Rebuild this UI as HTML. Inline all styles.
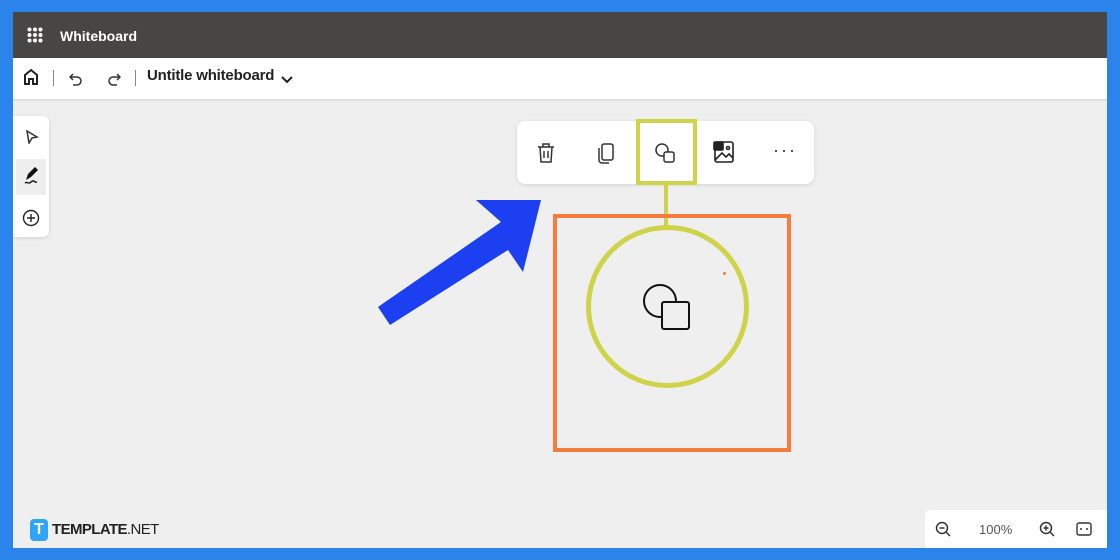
<!DOCTYPE html>
<html><head><meta charset="utf-8"><style>
*{margin:0;padding:0;box-sizing:border-box}
body{width:1120px;height:560px;background:#2b84ea;position:relative;overflow:hidden;font-family:"Liberation Sans",sans-serif}
#app{position:absolute;left:13px;top:12px;width:1094px;height:536px;background:#efefef;overflow:hidden}
.hdr{position:absolute;left:0;top:0;width:100%;height:46px;background:#474644;color:#fff}
.bar{position:absolute;left:0;top:46px;width:100%;height:41px;background:#fff;box-shadow:0 1px 3px rgba(0,0,0,.12)}
.abs{position:absolute}
</style></head><body>
<div id="app">
 <div class="hdr">
  <svg class="abs" style="left:14px;top:15px" width="16" height="16" fill="#fff"><g><circle cx="2.5" cy="2.5" r="2"/><circle cx="8" cy="2.5" r="2"/><circle cx="13.5" cy="2.5" r="2"/><circle cx="2.5" cy="8" r="2"/><circle cx="8" cy="8" r="2"/><circle cx="13.5" cy="8" r="2"/><circle cx="2.5" cy="13.5" r="2"/><circle cx="8" cy="13.5" r="2"/><circle cx="13.5" cy="13.5" r="2"/></g></svg>
  <div class="abs" style="left:47px;top:16px;font-size:14px;font-weight:bold">Whiteboard</div>
 </div>
 <div class="bar">
  <svg class="abs" style="left:10px;top:10px" width="16" height="18" fill="none" stroke="#222" stroke-width="2"><path d="M2 16V7l6-5 6 5v9h-4v-5H6v5z"/></svg>
  <div class="abs" style="left:40px;top:12px;width:1px;height:16px;background:#888"></div>
  <svg class="abs" style="left:56px;top:14px" width="14" height="14" fill="none" stroke="#333" stroke-width="1.5"><path d="M4 2L1 5l3 3M1 5h7a4 4 0 010 8H4"/></svg>
  <svg class="abs" style="left:94px;top:14px" width="14" height="14" fill="none" stroke="#333" stroke-width="1.5"><path d="M10 2l3 3-3 3M13 5H6a4 4 0 000 8h4"/></svg>
  <div class="abs" style="left:122px;top:12px;width:1px;height:16px;background:#888"></div>
  <div class="abs" style="left:134px;top:9px;font-size:15px;font-weight:bold;color:#222;letter-spacing:-0.2px">Untitle whiteboard</div>
  <svg class="abs" style="left:268px;top:18px" width="12" height="8" fill="none" stroke="#222" stroke-width="2"><path d="M1 1l5 5 5-5"/></svg>
 </div>
 <div class="abs" style="left:0;top:104px;width:36px;height:121px;background:#fff;border-radius:0 6px 6px 0;box-shadow:0 1px 4px rgba(0,0,0,.12)">
  <svg class="abs" style="left:12px;top:14px" width="14" height="14" fill="none" stroke="#333" stroke-width="1.5"><path d="M2 1l10 6-5 1-3 5z"/></svg>
  <div class="abs" style="left:3px;top:43px;width:30px;height:36px;background:#eee"></div>
  <svg class="abs" style="left:10px;top:50px" width="18" height="20" fill="#111"><path d="M3 14l2-6 7-7 3 3-7 7z"/><path d="M2 17c3-2 3 2 6-1s3 1 6 0" stroke="#111" stroke-width="1.4" fill="none"/></svg>
  <svg class="abs" style="left:9px;top:93px" width="18" height="18" fill="none" stroke="#222" stroke-width="1.4"><circle cx="9" cy="9" r="7.5"/><path d="M9 5v8M5 9h8"/></svg>
 </div>
 <div class="abs" style="left:504px;top:109px;width:297px;height:63px;background:#fff;border-radius:8px;box-shadow:0 1px 4px rgba(0,0,0,.12)"></div>
 <svg class="abs" style="left:523px;top:130px" width="20" height="22" fill="none" stroke="#333" stroke-width="1.5"><path d="M2 5h16M7 5V2h6v3M4 5l1 15h10l1-15M8 9v7M12 9v7"/></svg>
 <svg class="abs" style="left:583px;top:130px" width="20" height="22" fill="none" stroke="#333" stroke-width="1.5"><rect x="6" y="2" width="11" height="16" rx="2"/><path d="M3 6v12a3 3 0 003 3h7"/></svg>
 <div class="abs" style="left:623px;top:107px;width:61px;height:66px;border:4px solid #cfd34a"></div>
 <svg class="abs" style="left:641px;top:130px" width="24" height="24" fill="none" stroke="#333" stroke-width="1.5"><circle cx="8" cy="8" r="6"/><rect x="10" y="10" width="10" height="10" rx="2" fill="#fff"/></svg>
 <svg class="abs" style="left:700px;top:128px" width="22" height="24" fill="none" stroke="#222" stroke-width="1.6"><rect x="2" y="2" width="18" height="20" rx="2"/><rect x="1" y="2" width="9" height="8" rx="1" fill="#222"/><path d="M2 20l7-7 4 4 3-3 4 4"/><circle cx="15" cy="8" r="1.5"/></svg>
 <div class="abs" style="left:760px;top:128px;font-size:18px;color:#333;letter-spacing:2px">···</div>
 <div class="abs" style="left:651px;top:173px;width:4px;height:42px;background:#cfd34a"></div>
 <div class="abs" style="left:540px;top:202px;width:238px;height:238px;border:4px solid #f47c3c"></div>
 <div class="abs" style="left:573px;top:213px;width:163px;height:163px;border:5px solid #cfd34a;border-radius:50%"></div>
 <svg class="abs" style="left:628px;top:270px" width="52" height="50" fill="none" stroke="#111" stroke-width="2"><circle cx="19" cy="19" r="16"/><rect x="21" y="20" width="27" height="27" rx="2" fill="#efefef"/></svg>
 <div class="abs" style="left:710px;top:260px;width:3px;height:3px;background:#f47c3c;border-radius:50%"></div>
 <svg class="abs" style="left:360px;top:180px" width="170" height="140"><polygon points="17,133 5,115 128,30 103,8 168,8 150,80 135,58" fill="#1c3ff2"/></svg>
 <div class="abs" style="left:912px;top:498px;width:182px;height:38px;background:#fff;border-radius:6px 0 0 0"></div>
 <svg class="abs" style="left:922px;top:509px" width="16" height="16" fill="none" stroke="#333" stroke-width="1.5"><circle cx="7" cy="7" r="5.5"/><path d="M4.5 7h5M11 11l4 4"/></svg>
 <div class="abs" style="left:966px;top:510px;font-size:13px;color:#555">100%</div>
 <svg class="abs" style="left:1026px;top:509px" width="16" height="16" fill="none" stroke="#333" stroke-width="1.5"><circle cx="7" cy="7" r="5.5"/><path d="M4.5 7h5M7 4.5v5M11 11l4 4"/></svg>
 <svg class="abs" style="left:1063px;top:510px" width="16" height="14" fill="none" stroke="#333" stroke-width="1.4"><rect x="1" y="1" width="14" height="12" rx="2"/><path d="M4 7h2M10 7h2"/></svg>
 <div class="abs" style="left:17px;top:507px;width:18px;height:22px;background:#2fa6f5;border-radius:4px;color:#fff;font-weight:bold;font-size:16px;text-align:center;line-height:22px">T</div>
 <div class="abs" style="left:39px;top:509px;font-size:15px;font-weight:bold;color:#222;letter-spacing:-0.6px">TEMPLATE<span style="font-weight:normal">.NET</span></div>
</div>
</body></html>
